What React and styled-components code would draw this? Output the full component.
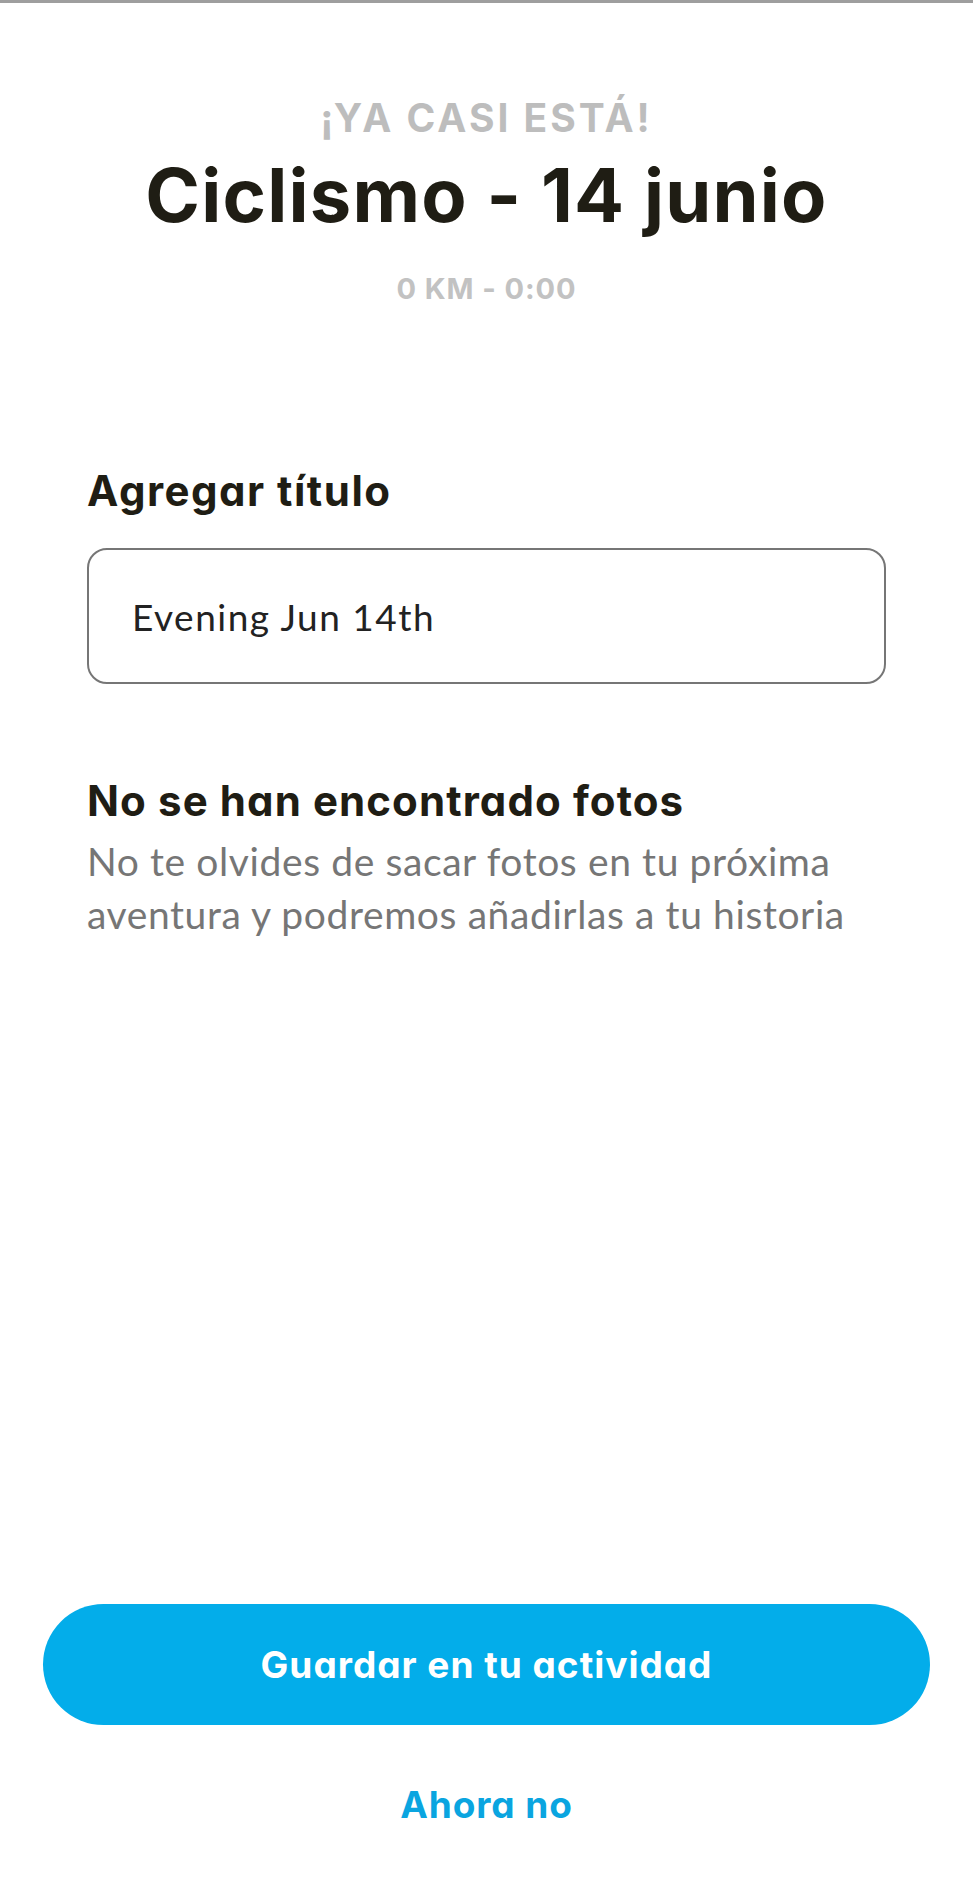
import React from 'react'
import styled, { createGlobalStyle } from 'styled-components'

const GlobalStyle = createGlobalStyle`
  html, body {
    margin: 0;
    padding: 0;
    background: #ffffff;
  }
  * {
    box-sizing: border-box;
  }
`

const App = () => {
  return (
    <>
      <GlobalStyle />
      <Screen>
        <Header>
          <Eyebrow>¡YA CASI ESTÁ!</Eyebrow>
          <Title>Ciclismo - 14 junio</Title>
          <Stats>0 KM - 0:00</Stats>
        </Header>

        <Form>
          <Label>Agregar título</Label>
          <TitleInput defaultValue="Evening Jun 14th" />

          <SectionTitle>No se han encontrado fotos</SectionTitle>
          <Description>
            No te olvides de sacar fotos en tu próxima aventura y podremos añadirlas a tu historia
          </Description>
        </Form>

        <Actions>
          <PrimaryButton>Guardar en tu actividad</PrimaryButton>
          <LinkButton>Ahora no</LinkButton>
        </Actions>
      </Screen>
    </>
  )
}

export default App

const heading = `
  font-family: Inter, "Noto Sans", sans-serif;
  font-feature-settings: "cv11" 1;
`

const body = `
  font-family: Lato, "Open Sans", sans-serif;
`

const Screen = styled.div`
  width: 100%;
  min-height: 1885px;
  border-top: 3px solid #9e9e9e;
  display: flex;
  flex-direction: column;
`

const Header = styled.header`
  display: flex;
  flex-direction: column;
  align-items: center;
  padding-top: 91px;
  ${heading}
`

const Eyebrow = styled.div`
  font-size: 39px;
  font-weight: 700;
  line-height: 48px;
  letter-spacing: 3px;
  color: #bdbdbd;
`

const Title = styled.h1`
  margin: 8px 0 0;
  font-size: 74px;
  font-weight: 700;
  line-height: 90px;
  letter-spacing: 1.2px;
  color: #1f1d14;
`

const Stats = styled.div`
  margin-top: 29px;
  font-size: 29px;
  font-weight: 700;
  line-height: 40px;
  letter-spacing: 0.9px;
  color: #c2c2c2;
`

const Form = styled.section`
  display: flex;
  flex-direction: column;
  padding: 0 87px;
  margin-top: 154px;
`

const Label = styled.h2`
  margin: 0;
  font-size: 42px;
  font-weight: 700;
  line-height: 56px;
  letter-spacing: 1.5px;
  color: #1f1d14;
  ${heading}
`

const TitleInput = styled.input`
  margin-top: 29px;
  height: 136px;
  width: 100%;
  border: 2px solid #767676;
  border-radius: 20px;
  padding: 0 0 0 43px;
  font-size: 37px;
  letter-spacing: 1.5px;
  color: #222222;
  background: #fff;
  outline: none;
  ${body}
`

const SectionTitle = styled(Label)`
  margin-top: 89px;
  letter-spacing: 1.1px;
`

const Description = styled.p`
  margin: 6px 0 0;
  font-size: 39px;
  line-height: 53px;
  letter-spacing: 0.6px;
  color: #767676;
  ${body}
`

const Actions = styled.div`
  margin-top: auto;
  display: flex;
  flex-direction: column;
  align-items: center;
  padding: 0 43px 55px;
  gap: 55px;
`

const PrimaryButton = styled.button`
  width: 100%;
  height: 121px;
  border: none;
  border-radius: 61px;
  background: #03adea;
  color: #ffffff;
  font-size: 37px;
  font-weight: 700;
  letter-spacing: 1px;
  cursor: pointer;
  ${heading}
`

const LinkButton = styled.button`
  border: none;
  background: none;
  padding: 0;
  height: 50px;
  font-size: 37px;
  font-weight: 700;
  line-height: 50px;
  letter-spacing: 0.9px;
  color: #0aa5e0;
  cursor: pointer;
  ${heading}
`
